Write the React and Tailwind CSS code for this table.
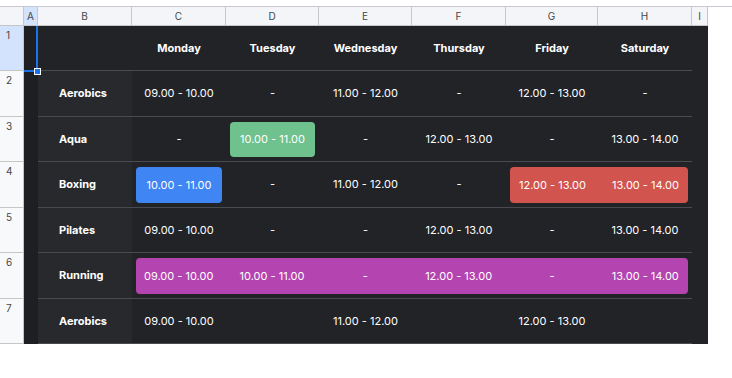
import React from "react";

const cols = "grid grid-cols-[24px_14px_94px_94px_93px_93px_94px_92px_94px_16px]";
const letters = ["", "A", "B", "C", "D", "E", "F", "G", "H", "I"];
const days = ["Monday", "Tuesday", "Wednesday", "Thursday", "Friday", "Saturday"];

// each row: label, then cells; a cell is a string or { color, items }
const rows = [
  { h: "h-[46px]", label: "Aerobics", cells: ["09.00 - 10.00", "-", "11.00 - 12.00", "-", "12.00 - 13.00", "-"] },
  {
    h: "h-[45px]",
    label: "Aqua",
    cells: ["-", { color: "bg-[#6fc18d]", items: ["10.00 - 11.00"] }, "-", "12.00 - 13.00", "-", "13.00 - 14.00"],
  },
  {
    h: "h-[46px]",
    label: "Boxing",
    cells: [
      { color: "bg-[#4085f4]", items: ["10.00 - 11.00"] },
      "-",
      "11.00 - 12.00",
      "-",
      { color: "bg-[#d1544f]", items: ["12.00 - 13.00", "13.00 - 14.00"] },
    ],
  },
  { h: "h-[45px]", label: "Pilates", cells: ["09.00 - 10.00", "-", "-", "12.00 - 13.00", "-", "13.00 - 14.00"] },
  {
    h: "h-[46px]",
    label: "Running",
    cells: [
      {
        color: "bg-[#b444b0]",
        items: ["09.00 - 10.00", "10.00 - 11.00", "-", "12.00 - 13.00", "-", "13.00 - 14.00"],
      },
    ],
  },
  { h: "h-[45px]", label: "Aerobics", cells: ["09.00 - 10.00", "", "11.00 - 12.00", "", "12.00 - 13.00", ""] },
];

const spans = { 1: "col-span-1", 2: "col-span-2", 6: "col-span-6" };

function RowHead({ n, active }) {
  return (
    <div
      className={`border-r border-b border-[#c4c7c5] pl-[6px] pt-[3px] text-[10px] leading-[12px] text-[#444746] ${
        active ? "bg-[#d3e3fd]" : "bg-[#f8f9fa]"
      }`}
    >
      {n}
    </div>
  );
}

function Cell({ cell }) {
  if (typeof cell === "string") {
    return (
      <div className="flex items-center justify-center border-b border-[#4a4b50] text-[11px] text-white">
        {cell}
      </div>
    );
  }
  return (
    <div className={`${spans[cell.items.length]} border-b border-[#4a4b50] px-1 pt-[5px] pb-[4px]`}>
      <div className={`h-full rounded-[4px] ${cell.color}`}>
        <div className="-mx-1 flex h-full">
          {cell.items.map((t, i) => (
            <div key={i} className="flex flex-1 items-center justify-center text-[11px] text-white">
              {t}
            </div>
          ))}
        </div>
      </div>
    </div>
  );
}

export default function App() {
  return (
    <div className="relative h-[378px] w-[732px] bg-white font-['Inter',sans-serif]">
      <div className="h-[6px]" />
      <div className="h-px w-full bg-[#c7cbd1]" />

      {/* column letters */}
      <div className={`${cols} h-[19px] w-[708px]`}>
        {letters.map((l, i) => (
          <div
            key={i}
            className={`flex items-center justify-center border-r border-b border-[#c4c7c5] text-[10px] text-[#444746] ${
              i === 1 ? "bg-[#d3e3fd]" : "bg-[#f3f5f9]"
            }`}
          >
            {l}
          </div>
        ))}
      </div>

      {/* row 1: days */}
      <div className={`${cols} h-[45px] w-[708px]`}>
        <RowHead n={1} active />
        <div className="bg-[#1e1f22]" />
        <div className="border-b border-[#4a4b50] bg-[#222327]" />
        {days.map((d) => (
          <div
            key={d}
            className="flex items-center justify-center border-b border-[#4a4b50] bg-[#222327] text-[11px] font-bold text-white"
          >
            {d}
          </div>
        ))}
        <div className="bg-[#222327]" />
      </div>

      {rows.map((r, ri) => (
        <div key={ri} className={`${cols} ${r.h} w-[708px]`}>
          <RowHead n={ri + 2} />
          <div className="bg-[#1e1f22]" />
          <div className="flex items-center border-b border-[#4a4b50] bg-[#28292d] pl-[21px] text-[11px] font-bold text-white">
            {r.label}
          </div>
          <div className="col-span-6 grid grid-cols-subgrid bg-[#222327]">
            {r.cells.map((c, ci) => (
              <Cell key={ci} cell={c} />
            ))}
          </div>
          <div className="bg-[#222327]" />
        </div>
      ))}

      {/* selected cell A1 */}
      <div className="absolute left-[24px] top-[26px] h-[46px] w-[14px] border-r-2 border-b-2 border-[#1a73e8]" />
      <div className="absolute left-[34px] top-[68px] h-[7px] w-[7px] border border-white bg-[#1a73e8]" />
    </div>
  );
}
